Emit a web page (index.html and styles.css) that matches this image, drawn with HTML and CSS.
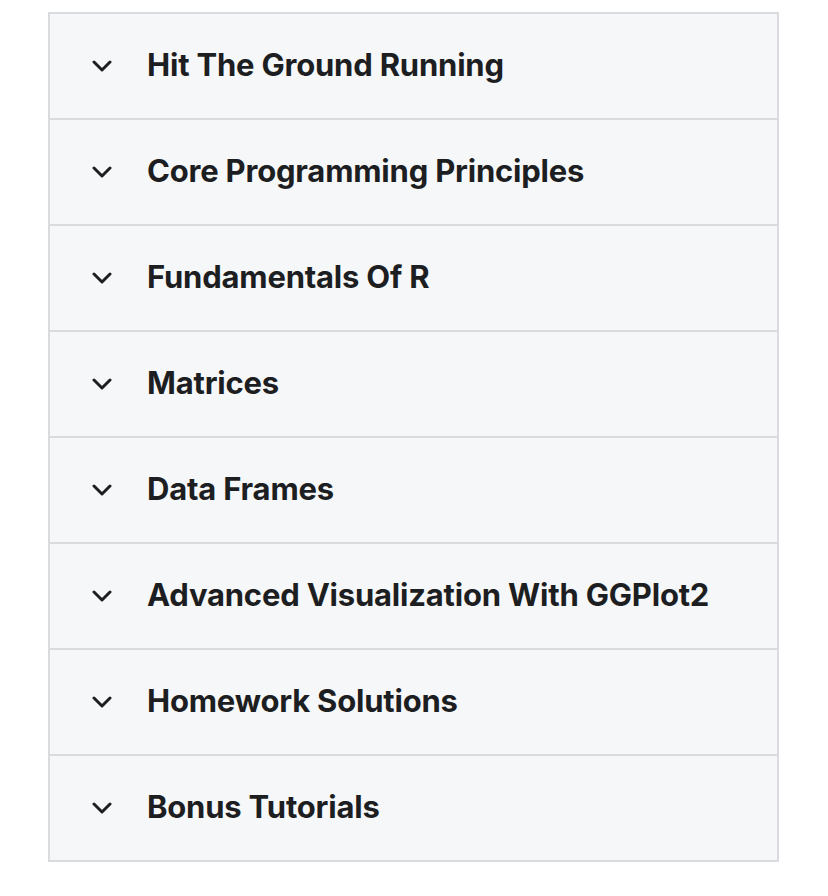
FILE: index.html
```html
<!DOCTYPE html>
<html>
<head>
<meta charset="utf-8">
<link rel="stylesheet" href="styles.css">
</head>
<body>
<div class="accordion">
  <div class="row"><svg class="chev" viewBox="0 0 20 12"><path d="M2 2 L10 10 L18 2"/></svg><span class="title">Hit The Ground Running</span></div>
  <div class="row"><svg class="chev" viewBox="0 0 20 12"><path d="M2 2 L10 10 L18 2"/></svg><span class="title">Core Programming Principles</span></div>
  <div class="row"><svg class="chev" viewBox="0 0 20 12"><path d="M2 2 L10 10 L18 2"/></svg><span class="title">Fundamentals Of R</span></div>
  <div class="row"><svg class="chev" viewBox="0 0 20 12"><path d="M2 2 L10 10 L18 2"/></svg><span class="title">Matrices</span></div>
  <div class="row"><svg class="chev" viewBox="0 0 20 12"><path d="M2 2 L10 10 L18 2"/></svg><span class="title">Data Frames</span></div>
  <div class="row"><svg class="chev" viewBox="0 0 20 12"><path d="M2 2 L10 10 L18 2"/></svg><span class="title">Advanced Visualization With GGPlot2</span></div>
  <div class="row"><svg class="chev" viewBox="0 0 20 12"><path d="M2 2 L10 10 L18 2"/></svg><span class="title">Homework Solutions</span></div>
  <div class="row"><svg class="chev" viewBox="0 0 20 12"><path d="M2 2 L10 10 L18 2"/></svg><span class="title">Bonus Tutorials</span></div>
</div>
</body>
</html>
```
FILE: styles.css
```css
html, body {
  margin: 0;
  padding: 0;
  background: #ffffff;
}
.accordion {
  margin: 12px 0 0 48px;
  width: 731px;
  box-sizing: border-box;
  border: 2px solid #d9dbde;
  background: #f6f7f9;
  font-family: Inter, "Noto Sans", sans-serif;
}
.row {
  height: 104px;
  display: flex;
  align-items: center;
  border-top: 2px solid #d9dbde;
}
.row:first-child {
  border-top: none;
}
.chev {
  width: 20px;
  height: 12px;
  margin-left: 42px;
  margin-right: 35px;
  flex: none;
}
.chev path {
  fill: none;
  stroke: #1d1e21;
  stroke-width: 3;
  stroke-linecap: round;
  stroke-linejoin: round;
}
.title {
  font-size: 31px;
  font-weight: 700;
  color: #1d1e21;
  letter-spacing: -0.2px;
  padding-bottom: 4px;
}
```
